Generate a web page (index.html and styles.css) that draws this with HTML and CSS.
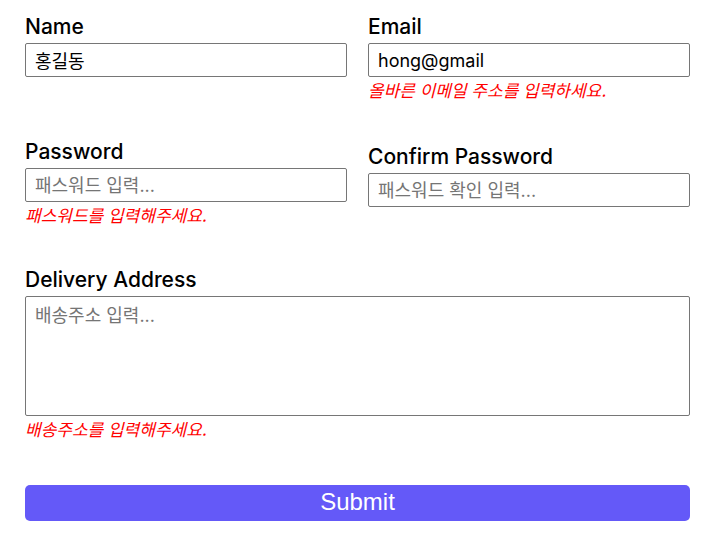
FILE: index.html
```html
<!DOCTYPE html>
<html lang="ko">
<head>
<meta charset="utf-8">
<link rel="stylesheet" href="styles.css">
<title>Form</title>
</head>
<body>
<form class="form">
  <div class="row">
    <div class="field">
      <label class="label" for="name">Name</label>
      <input class="input" id="name" type="text" value="홍길동">
    </div>
    <div class="field">
      <label class="label" for="email">Email</label>
      <input class="input" id="email" type="text" value="hong@gmail">
      <p class="error">올바른 이메일 주소를 입력하세요.</p>
    </div>
  </div>
  <div class="row">
    <div class="field">
      <label class="label" for="pw">Password</label>
      <input class="input" id="pw" type="password" placeholder="패스워드 입력...">
      <p class="error">패스워드를 입력해주세요.</p>
    </div>
    <div class="field field-shift">
      <label class="label" for="pw2">Confirm Password</label>
      <input class="input" id="pw2" type="password" placeholder="패스워드 확인 입력...">
    </div>
  </div>
  <div class="field field-wide">
    <label class="label" for="addr">Delivery Address</label>
    <textarea class="input textarea" id="addr" placeholder="배송주소 입력..."></textarea>
    <p class="error">배송주소를 입력해주세요.</p>
  </div>
  <button class="submit" type="button">Submit</button>
</form>
</body>
</html>
```

FILE: styles.css
```css
* { box-sizing: border-box; }
html, body { margin: 0; background: #fff; }
body {
  font-family: Inter, "Noto Sans CJK KR", sans-serif;
  color: #000;
}
.form {
  display: flex;
  flex-direction: column;
  padding: 14px 15px 0 25px;
  width: 705px;
}
.row {
  display: grid;
  grid-template-columns: 322px 322px;
  column-gap: 21px;
  margin-bottom: 39px;
}
.field {
  display: flex;
  flex-direction: column;
}
.field-shift { padding-top: 5px; }
.label {
  font-size: 21px;
  line-height: 25px;
  font-weight: 500;
  margin-bottom: 4px;
}
.input {
  height: 34px;
  border: 1px solid #767676;
  border-radius: 2px;
  padding: 0 9px;
  font-family: Inter, "Noto Sans CJK KR", sans-serif;
  font-size: 18px;
  color: #000;
  outline: none;
}
.input::placeholder { color: #757575; }
.textarea {
  height: 120px;
  width: 665px;
  resize: none;
  padding: 4px 9px;
}
.error {
  margin: 3px 0 0;
  color: #ff0000;
  font-style: italic;
  font-size: 17px;
  line-height: 20px;
  font-family: "Noto Sans CJK KR", sans-serif;
}
.field-wide { margin-top: 3px; margin-bottom: 46px; }
.submit {
  width: 665px;
  height: 36px;
  border: none;
  border-radius: 5px;
  background: #6459f8;
  color: #fff;
  font-family: "Liberation Sans", Arial, sans-serif;
  font-size: 24px;
  padding: 0 0 2px;
}
```
